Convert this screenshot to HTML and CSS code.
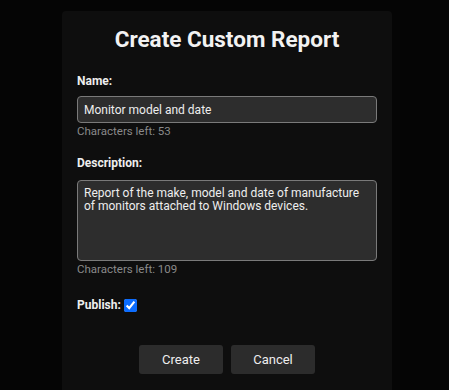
FILE: index.html
```html
<!DOCTYPE html>
<html lang="en">
<head>
    <meta charset="UTF-8">
    <meta name="viewport" content="width=device-width, initial-scale=1.0">
    <title>Create Custom Report</title>
    <link rel="stylesheet" href="styles.css">
</head>
<body>
    <div class="dialog">
        <h1>Create Custom Report</h1>

        <form class="report-form">
            <div class="field">
                <label for="name">Name:</label>
                <input type="text" id="name" value="Monitor model and date">
                <span class="hint">Characters left: 53</span>
            </div>

            <div class="field">
                <label for="description">Description:</label>
                <textarea id="description">Report of the make, model and date of manufacture of monitors attached to Windows devices.</textarea>
                <span class="hint">Characters left: 109</span>
            </div>

            <div class="field publish">
                <label for="publish">Publish:</label>
                <input type="checkbox" id="publish" checked>
            </div>

            <div class="actions">
                <button type="button">Create</button>
                <button type="button">Cancel</button>
            </div>
        </form>
    </div>
</body>
</html>
```

FILE: styles.css
```css
body {
    font-family: Roboto, Arial, sans-serif;
    margin: 0;
    padding: 11px 0 0 62px;
    background: #050505;
    color: #eee;
}

.dialog {
    width: 330px;
    min-height: 379px;
    box-sizing: border-box;
    padding: 14px 15px 0;
    background: #0e0e0e;
    border-radius: 4px 4px 0 0;
}

.dialog h1 {
    margin: 0 0 21px;
    font-size: 22.5px;
    line-height: 28px;
    text-align: center;
    color: #f2f2f2;
}

.field {
    display: flex;
    flex-direction: column;
    margin-bottom: 18px;
}

.field label {
    font-size: 12px;
    font-weight: bold;
    line-height: 15px;
    margin-bottom: 7px;
}

.field input[type="text"],
.field textarea {
    width: 300px;
    box-sizing: border-box;
    background: #2d2d2d;
    color: #eee;
    border: 1px solid #7a7a7a;
    border-radius: 4px;
    font-family: Roboto, Arial, sans-serif;
    font-size: 12px;
    padding: 4px 6px;
}

.field input[type="text"] {
    height: 27px;
}

.field textarea {
    height: 81px;
    margin-top: 2px;
    padding-top: 6px;
    line-height: 13px;
    resize: none;
}

.hint {
    margin-top: 2px;
    font-size: 11.5px;
    line-height: 13px;
    color: #8a8a8a;
}

.field.publish {
    flex-direction: row;
    align-items: center;
    margin-top: 22px;
}

.field.publish label {
    margin: 0 3px 0 0;
}

.field.publish input {
    width: 13px;
    height: 13px;
    margin: 0;
    accent-color: #0b6cff;
}

.actions {
    display: flex;
    justify-content: center;
    gap: 8px;
    margin-top: 32px;
}

.actions button {
    width: 84px;
    height: 29px;
    border: none;
    border-radius: 3px;
    background: #2c2c2c;
    color: #eee;
    font-family: Roboto, Arial, sans-serif;
    font-size: 13px;
    cursor: pointer;
}
```
